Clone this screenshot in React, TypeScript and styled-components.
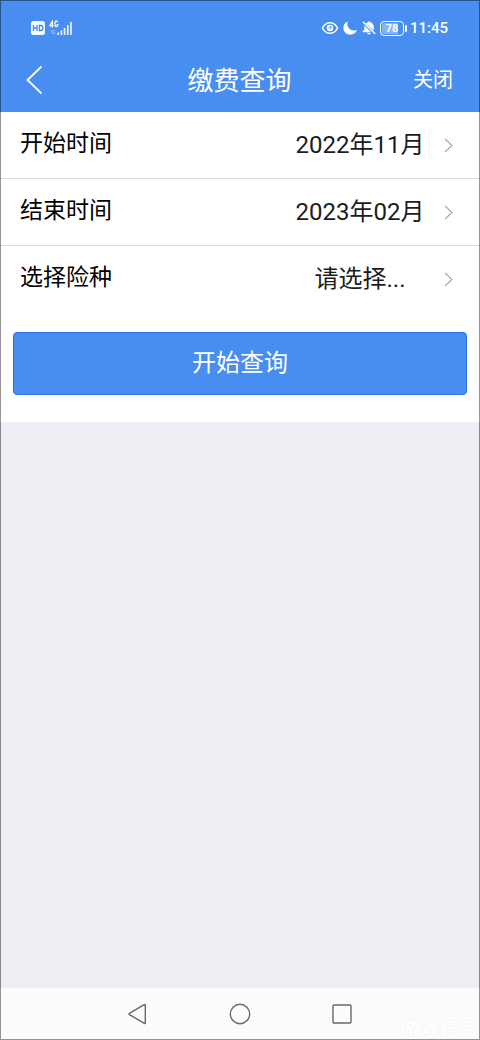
import React from "react";
import styled, { createGlobalStyle } from "styled-components";

const GlobalStyle = createGlobalStyle`
  * { box-sizing: border-box; }
  body {
    margin: 0;
    font-family: Roboto, "Noto Sans CJK SC", sans-serif;
    background: #eeedf3;
  }
  button, select { font-family: inherit; margin: 0; padding: 0; border: 0; background: none; }
`;

const Screen = styled.div`
  position: relative;
  display: flex;
  flex-direction: column;
  min-height: 100vh;
  &::after {
    content: "";
    position: absolute;
    inset: 0;
    border: 1px solid rgba(0, 0, 0, 0.42);
    pointer-events: none;
  }
`;

const Header = styled.header`
  background: #488df0;
  color: #fff;
`;

const StatusBar = styled.div`
  display: flex;
  justify-content: space-between;
  align-items: center;
  height: 48px;
  padding: 8px 32px 0 30px;
`;

const StatusGroup = styled.div`
  display: flex;
  align-items: center;
  gap: 3px;
`;

const Clock = styled.time`
  font-size: 15px;
  line-height: 20px;
  font-weight: 500;
`;

const TitleBar = styled.div`
  display: grid;
  grid-template-columns: 1fr auto 1fr;
  align-items: center;
  height: 64px;
  padding: 0 27px 0 26px;
`;

const Title = styled.h1`
  margin: 0;
  padding-top: 2px;
  font-size: 26px;
  line-height: 40px;
  font-weight: 400;
`;

const BackButton = styled.button`
  display: flex;
  justify-self: start;
  color: inherit;
`;

const CloseButton = styled.button`
  justify-self: end;
  color: inherit;
  font-size: 20px;
  line-height: 32px;
`;

const Form = styled.form`
  background: #fff;
  padding-bottom: 27px;
`;

const Row = styled.div`
  display: flex;
  align-items: center;
  height: 67px;
  padding: 0 26px 0 20px;
  border-bottom: 1px solid #dcdcdc;
  &:last-of-type { border-bottom-color: transparent; }
`;

const Label = styled.label`
  flex: 1;
  padding-bottom: 2px;
  color: #000;
  font-size: 23px;
  line-height: 32px;
`;

const Picker = styled.select`
  appearance: none;
  width: 160px;
  height: 40px;
  margin-right: 4px;
  color: #1c1c1c;
  font-size: 24px;
  line-height: 40px;
  text-align: center;
  text-align-last: center;
`;

const SubmitButton = styled.button`
  display: block;
  width: calc(100% - 26px);
  height: 63px;
  margin: 19px 13px 0;
  padding-bottom: 2px;
  border: 1px solid #2b70e4;
  border-radius: 4px;
  background: #488df0;
  color: #fff;
  font-size: 24px;
  line-height: 40px;
`;

const NavBar = styled.nav`
  display: flex;
  justify-content: center;
  align-items: center;
  gap: 78px;
  height: 52px;
  margin-top: auto;
  background: #fcfcfc;
`;

const NavButton = styled.button`
  display: flex;
`;

const Watermark = styled.span`
  position: absolute;
  right: 0;
  bottom: 0;
  color: #fff;
  font-size: 20px;
  line-height: 20px;
  font-weight: 700;
  text-shadow: 0 0 1px #e8e8e8;
`;

const HdIcon = () => (
  <svg width="16" height="16" viewBox="0 0 16 16" aria-hidden="true">
    <rect x="1" y="1" width="14" height="14" rx="2.5" fill="#f4f8ff" />
    <path d="M3.5 5v6M7 5v6M3.5 8H7M9.4 5.5v5h1.2c1.5 0 2.3-1 2.3-2.5s-.8-2.5-2.3-2.5z" fill="none" stroke="#488df0" strokeWidth="1.3" />
  </svg>
);

const SignalIcon = () => (
  <svg width="24" height="16" viewBox="0 0 24 16" aria-hidden="true">
    <g fill="none" stroke="#fff" strokeWidth="1.2">
      <path d="M3.400 7.500V1.200L.9 5.600h3.800M8.800 2.200C8.400 1.400 8 1.200 7.400 1.200c-1 0-1.500.8-1.500 2.600s.5 2.900 1.500 2.900 1.400-.6 1.400-2.200H7.400" />
      <path d="M3 14v-4L2 11M5 10v4l1-1" strokeWidth=".7" opacity=".6" />
    </g>
    <path d="M8.300 12.500H10V15H8.300zM11.500 10.500h1.700V15h-1.700zM14.700 8h1.700v7h-1.700zM17.900 5h1.700v10h-1.700zM21.100 2h1.700v13h-1.700z" fill="#eaf3ff" />
  </svg>
);

const EyeIcon = () => (
  <svg width="18" height="16" viewBox="0 0 18 16" aria-hidden="true">
    <path d="M1.500 8C5 .9 13 .9 16.500 8 13 15.100 5 15.100 1.500 8z" fill="none" stroke="#fff" strokeWidth="1.500" />
    <circle cx="9" cy="8" r="2.600" fill="#c9defc" stroke="#fff" strokeWidth="1.200" />
    <circle cx="9.600" cy="7.300" r="1" fill="#488df0" />
  </svg>
);

const MoonIcon = () => (
  <svg width="16" height="16" viewBox="0 0 16 16" aria-hidden="true">
    <path d="M5.700 1.200C-.1 3.500.2 12 5.200 14.100c4 1.700 8.300-.2 9.800-4-5.700 2-11.200-2.600-9.300-8.900z" fill="#fff" />
  </svg>
);

const BellOffIcon = () => (
  <svg width="16" height="16" viewBox="0 0 16 16" aria-hidden="true">
    <path d="M4.700 3.400C5.500 2.700 6.300 2.300 7.100 2.200c.1-1.300 1.900-1.300 2 0 2.400.5 3.700 2.300 3.700 4.700v3.700zM3.300 5.600l7 6.700H1.600v-1.100l1.700-1.400zM6 13h4c-.5 1.900-3.500 1.900-4 0z" fill="#fff" />
    <path d="M1.800 1.800l12.400 12" stroke="#fff" strokeWidth="1.400" />
  </svg>
);

const BatteryShell = styled.span`
  display: flex;
  align-items: center;
  gap: 1px;
  &::after {
    content: "";
    width: 2px;
    height: 7px;
    border-radius: 1px;
    background: #fff;
  }
`;

const BatteryLevel = styled.span`
  width: 24px;
  height: 15px;
  border: 1px solid #fff;
  border-radius: 4px;
  background: linear-gradient(90deg, #84b3f6 78%, #488df0 78%);
  box-shadow: inset 0 0 0 1px #488df0;
  font-size: 11px;
  line-height: 13px;
  font-weight: 700;
  text-align: center;
`;

const BackIcon = () => (
  <svg width="18" height="30" viewBox="0 0 18 30" aria-hidden="true">
    <path d="M15.500 1.500L1.500 15l14 13.500" fill="none" stroke="#fff" strokeWidth="1.800" />
  </svg>
);

const ChevronIcon = () => (
  <svg width="10" height="16" viewBox="0 0 10 16" aria-hidden="true">
    <path d="M1 2L8 8.500 1 15" fill="none" stroke="#a9a9a9" strokeWidth="1.200" />
  </svg>
);

const navShapes = [
  { name: "返回", shape: <path d="M19.300 3.300v17.400c0 .7-.5.900-1 .6L3.400 12.600c-.5-.3-.5-.9 0-1.200l14.900-8.700c.5-.3 1-.1 1 .6z" /> },
  { name: "主页", shape: <circle cx="12" cy="12" r="9.700" /> },
  { name: "最近任务", shape: <rect x="3" y="3" width="18" height="18" rx="1" /> },
];

const fields = [
  { id: "start", label: "开始时间", value: "2022年11月" },
  { id: "end", label: "结束时间", value: "2023年02月" },
  { id: "type", label: "选择险种", value: "请选择..." },
];

export default function App() {
  return (
    <>
      <GlobalStyle />
      <Screen>
        <Header>
          <StatusBar>
            <StatusGroup>
              <HdIcon />
              <SignalIcon />
            </StatusGroup>
            <StatusGroup>
              <EyeIcon />
              <MoonIcon />
              <BellOffIcon />
              <BatteryShell>
                <BatteryLevel>78</BatteryLevel>
              </BatteryShell>
              <Clock>11:45</Clock>
            </StatusGroup>
          </StatusBar>
          <TitleBar>
            <BackButton type="button" aria-label="返回">
              <BackIcon />
            </BackButton>
            <Title>缴费查询</Title>
            <CloseButton type="button">关闭</CloseButton>
          </TitleBar>
        </Header>
        <Form onSubmit={(e) => e.preventDefault()}>
          {fields.map((f) => (
            <Row key={f.id}>
              <Label htmlFor={f.id}>{f.label}</Label>
              <Picker id={f.id} defaultValue={f.value}>
                <option>{f.value}</option>
              </Picker>
              <ChevronIcon />
            </Row>
          ))}
          <SubmitButton type="submit">开始查询</SubmitButton>
        </Form>
        <NavBar>
          {navShapes.map((n) => (
            <NavButton key={n.name} type="button" aria-label={n.name}>
              <svg width="24" height="24" viewBox="0 0 24 24" fill="none" stroke="#686868" strokeWidth="1.400">
                {n.shape}
              </svg>
            </NavButton>
          ))}
        </NavBar>
        <Watermark>游戏坛子</Watermark>
      </Screen>
    </>
  );
}
